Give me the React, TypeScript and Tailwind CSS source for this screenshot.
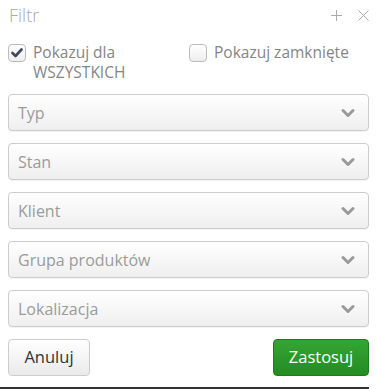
import React from "react";

function Chevron() {
  return (
    <svg width="14" height="10" viewBox="0 0 14 10" className="shrink-0">
      <path d="M2 2.5 L7 7.5 L12 2.5" fill="none" stroke="#9a9a9a" strokeWidth="3" strokeLinecap="round" strokeLinejoin="round" />
    </svg>
  );
}

function Select({ label }: { label: string }) {
  return (
    <div className="h-[37px] flex items-center justify-between pl-[9px] pr-[13px] rounded-[4px] border border-[#cccccc] bg-gradient-to-b from-white to-[#efefef] shadow-[0_1px_1px_rgba(0,0,0,0.05)]">
      <span className="text-[16px] text-[#9b9b9b]">{label}</span>
      <Chevron />
    </div>
  );
}

export default function App() {
  return (
    <div className="w-[377px] h-[389px] bg-white relative overflow-hidden" style={{ fontFamily: '"Open Sans", sans-serif' }}>
      <div className="flex items-center justify-between pl-[9px] pr-[8px] pt-[3px] h-[28px]">
        <span className="text-[18px] font-light text-[#aaaaaa]">Filtr</span>
        <div className="flex items-center gap-[16px] text-[#aaaaaa]">
          <svg width="11" height="11" viewBox="0 0 11 11"><path d="M5.5 0 V11 M0 5.5 H11" stroke="#aaaaaa" strokeWidth="1" /></svg>
          <svg width="11" height="11" viewBox="0 0 11 11"><path d="M0.5 0.5 L10.5 10.5 M10.5 0.5 L0.5 10.5" stroke="#aaaaaa" strokeWidth="1" /></svg>
        </div>
      </div>
      <div className="flex pl-[8px] pt-[14px] h-[66px]">
        <div className="flex items-start w-[181px]">
          <div className="w-[18px] h-[18px] mt-[2px] rounded-[4px] border border-[#bbbbbb] bg-gradient-to-b from-white to-[#eeeeee] flex items-center justify-center shrink-0">
            <svg width="12" height="10" viewBox="0 0 12 10"><path d="M1.5 5 L4.5 8 L10.5 1.5" fill="none" stroke="#3d4a5c" strokeWidth="2.6" strokeLinecap="round" strokeLinejoin="round" /></svg>
          </div>
          <div className="ml-[7px] flex flex-col text-[15.5px] leading-[20px] text-[#858585]">
            <span>Pokazuj dla</span>
            <span>WSZYSTKICH</span>
          </div>
        </div>
        <div className="flex items-start">
          <div className="w-[18px] h-[18px] mt-[2px] rounded-[4px] border border-[#bbbbbb] bg-gradient-to-b from-white to-[#eeeeee] shrink-0" />
          <span className="ml-[7px] text-[15.5px] leading-[20px] text-[#858585]">Pokazuj zamknięte</span>
        </div>
      </div>
      <div className="flex flex-col gap-[12px] px-[8px] w-[377px]">
        <Select label="Typ" />
        <Select label="Stan" />
        <Select label="Klient" />
        <Select label="Grupa produktów" />
        <Select label="Lokalizacja" />
      </div>
      <div className="flex justify-between px-[8px] pt-[12px]">
        <button className="w-[82px] h-[37px] rounded-[4px] border border-[#cccccc] bg-gradient-to-b from-white to-[#eaeaea] text-[16.5px] text-[#333333]">Anuluj</button>
        <button className="w-[96px] h-[37px] rounded-[4px] border border-[#1f7a1f] bg-gradient-to-b from-[#34a534] to-[#238c23] text-[16.5px] text-white">Zastosuj</button>
      </div>
      <div className="absolute left-0 top-[387px] w-[369px] h-[2px] bg-[#333333]" />
    </div>
  );
}
